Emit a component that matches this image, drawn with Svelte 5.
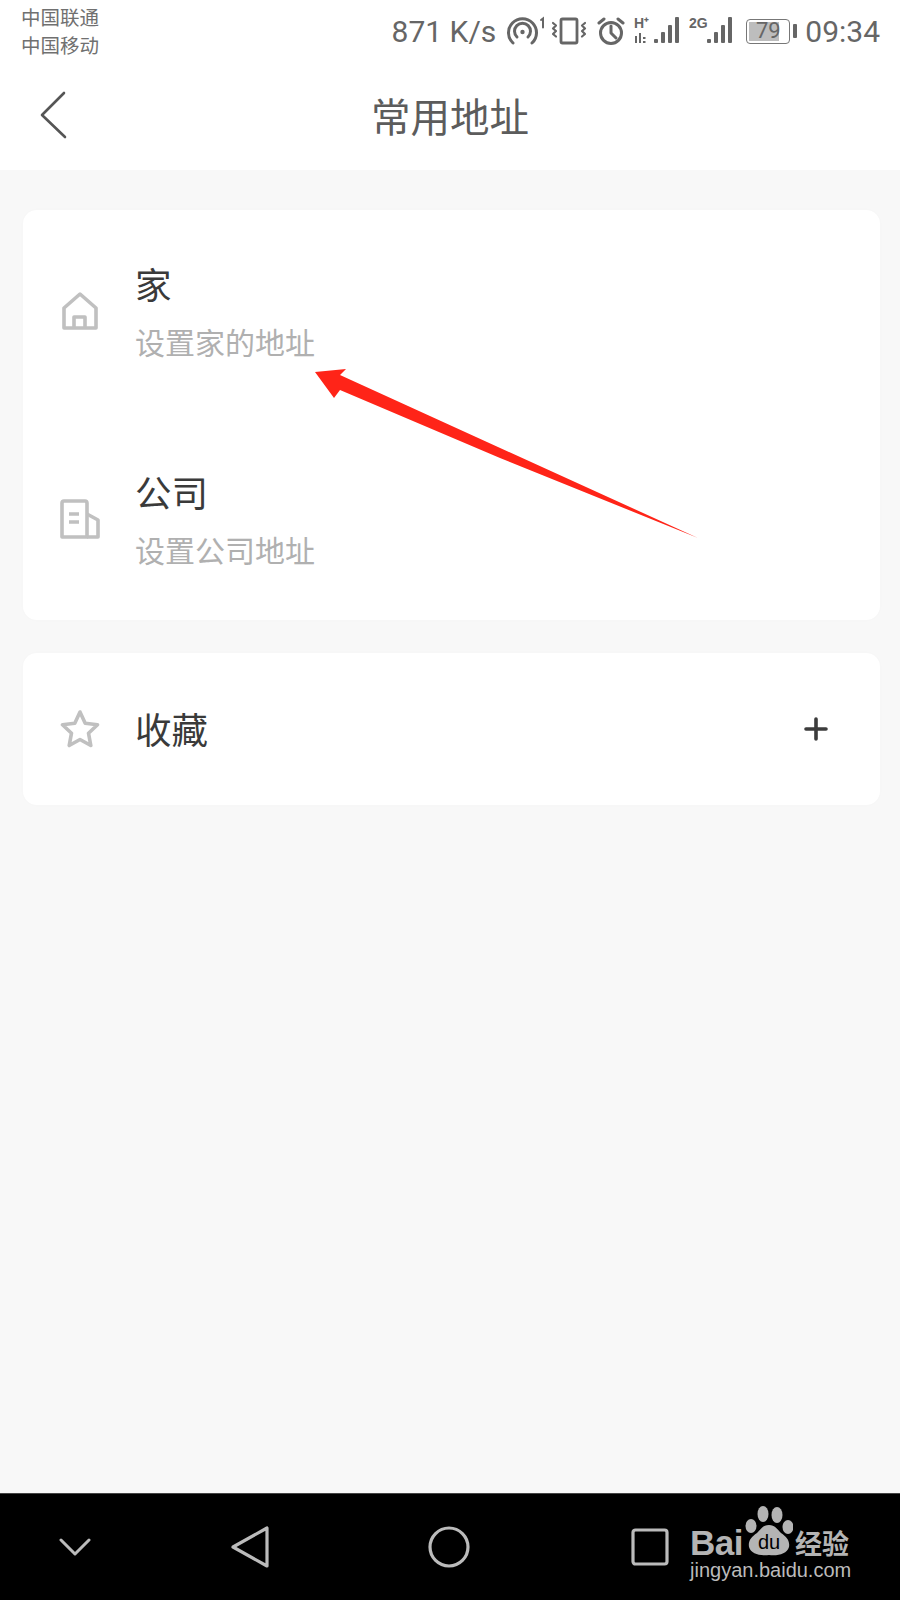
<script lang="ts">
  const rows = [
    { id: 'home', title: '家', sub: '设置家的地址' },
    { id: 'work', title: '公司', sub: '设置公司地址' }
  ]
</script>

<div class="page">
  <header class="head">
    <div class="status">
      <div class="carrier">
        <span>中国联通</span>
        <span>中国移动</span>
      </div>
      <div class="indicators">
        <span class="speed">871 K/s</span>
        <svg class="s-hot" width="40" height="30" viewBox="0 0 40 30" fill="none" stroke="#666" stroke-width="3" stroke-linecap="round">
          <path d="M7 27a14 14 0 1 1 19 0"/>
          <path d="M11 21a8 8 0 1 1 11 0"/>
          <circle cx="16.500" cy="16" r="2.200" fill="#666" stroke="none"/>
          <path d="M35 4l2-1.500v9" stroke-width="2"/>
        </svg>
        <svg class="s-vib" width="36" height="30" viewBox="0 0 36 30" fill="none" stroke="#666" stroke-width="2.800" stroke-linecap="round" stroke-linejoin="round">
          <rect x="10" y="3" width="16" height="24" rx="1.500"/>
          <path d="M2 7l3 2.500-3 3 3 2.500-3 3 3 2.500M34 7l-3 2.500 3 3-3 2.500 3 3-3 2.500" stroke-width="2.200"/>
        </svg>
        <svg class="s-alarm" width="28" height="30" viewBox="0 0 28 30" fill="none" stroke="#666" stroke-width="3" stroke-linecap="round" stroke-linejoin="round">
          <circle cx="14" cy="17" r="10.500"/>
          <path d="M14 10v7l5 5M2 7l5-4M26 7l-5-4"/>
        </svg>
        <svg class="s-sig" width="48" height="30" viewBox="0 0 48 30" fill="#666">
          <text x="0" y="12" class="tiny">H⁺</text>
          <path d="M1 20h2v7H1zM5 17h2v10H5zM9 21h2.500v2H9zM9 25h2.500v2H9z"/>
          <rect x="20" y="23" width="4" height="4" rx="1"/>
          <rect x="27" y="16" width="4" height="11" rx="1"/>
          <rect x="34" y="9" width="4" height="18" rx="1"/>
          <rect x="41" y="1" width="4" height="26" rx="1"/>
        </svg>
        <svg class="s-sig2" width="46" height="30" viewBox="0 0 46 30" fill="#666">
          <text x="0" y="12" class="tiny">2G</text>
          <rect x="18" y="23" width="4" height="4" rx="1"/>
          <rect x="25" y="16" width="4" height="11" rx="1"/>
          <rect x="32" y="9" width="4" height="18" rx="1"/>
          <rect x="39" y="1" width="4" height="26" rx="1"/>
        </svg>
        <div class="battery">
          <div class="cell">
            <div class="level"></div>
            <span>79</span>
          </div>
          <div class="cap"></div>
        </div>
        <span class="clock">09:34</span>
      </div>
    </div>
    <div class="nav-title">
      <svg class="back" width="28" height="48" viewBox="0 0 28 48" fill="none" stroke="#555" stroke-width="2.600" stroke-linecap="round" stroke-linejoin="round">
        <path d="M25 2 3 24l23 22"/>
      </svg>
      <h1>常用地址</h1>
    </div>
  </header>

  <main class="content">
    <section class="card places">
      {#each rows as row (row.id)}
        <div class="row">
          {#if row.id === 'home'}
            <svg class="icon" width="40" height="40" viewBox="0 0 40 40" fill="none" stroke="#c0c0c0" stroke-width="3.600" stroke-linejoin="round">
              <path d="M4 17 20 3l16 14v20H4Z"/>
              <path d="M14 37V26h11v11"/>
            </svg>
          {:else}
            <svg class="icon" width="40" height="40" viewBox="0 0 40 40" fill="none" stroke="#c0c0c0" stroke-width="3.600" stroke-linejoin="round">
              <path d="M2 38V4q0-2 2-2h21q2 0 2 2v34Z"/>
              <path d="M27 15l11 6v17H27"/>
              <path d="M9 15h10M9 23h10"/>
            </svg>
          {/if}
          <div class="text">
            <div class="title">{row.title}</div>
            <div class="sub">{row.sub}</div>
          </div>
        </div>
      {/each}
    </section>

    <section class="card fav">
      <div class="row short">
        <svg class="icon" width="40" height="40" viewBox="0 0 40 40" fill="none" stroke="#c0c0c0" stroke-width="3.600" stroke-linejoin="round">
          <path d="M20 3l5.200 11.200 12.300 1.500-9 8.500 2.300 12.300L20 30.500 9.200 36.500l2.300-12.300-9-8.500 12.300-1.500Z"/>
        </svg>
        <div class="title">收藏</div>
        <svg class="plus" width="24" height="24" viewBox="0 0 24 24" stroke="#3c3c3c" stroke-width="3.600" stroke-linecap="round">
          <path d="M12 2v20M2 12h20"/>
        </svg>
      </div>
    </section>

    <svg class="arrow" width="400" height="185" viewBox="0 0 400 185">
      <path d="M2 17 33 14 27 20 385 183 187 103 27 35 21 43Z" fill="#ff2418"/>
    </svg>
  </main>

  <footer class="sysnav">
    <svg class="n-down" width="32" height="18" viewBox="0 0 32 18" fill="none" stroke="#bbb" stroke-width="3" stroke-linecap="round" stroke-linejoin="round">
      <path d="M2 2l14 14L30 2"/>
    </svg>
    <svg class="n-back" width="38" height="42" viewBox="0 0 38 42" fill="none" stroke="#bbb" stroke-width="3.200" stroke-linejoin="round">
      <path d="M2 21 36 2v38Z"/>
    </svg>
    <svg class="n-home" width="42" height="42" viewBox="0 0 42 42" fill="none" stroke="#bbb" stroke-width="3.200">
      <circle cx="21" cy="21" r="19"/>
    </svg>
    <svg class="n-recent" width="38" height="38" viewBox="0 0 38 38" fill="none" stroke="#bbb" stroke-width="3.200" stroke-linejoin="round">
      <rect x="2" y="2" width="34" height="34" rx="2.500"/>
    </svg>
    <div class="logo">
      <div class="logo-top">
        <span class="bai">Bai</span>
        <svg class="paw" width="48" height="52" viewBox="0 0 48 52" fill="#b4b4b4">
          <ellipse cx="6" cy="20" rx="5.500" ry="7"/>
          <ellipse cx="18" cy="8" rx="5.500" ry="8"/>
          <ellipse cx="32" cy="9" rx="5.500" ry="8"/>
          <ellipse cx="43" cy="21" rx="5.500" ry="7"/>
          <path d="M24 19c6 0 8 4 12 8 6 4 9 8 8 14-2 7-11 9-20 8-9 1-18-1-20-8-1-6 2-10 8-14 4-4 6-8 12-8Z"/>
          <text x="24" y="43" class="du">du</text>
        </svg>
        <span class="cn">经验</span>
      </div>
      <div class="url">jingyan.baidu.com</div>
    </div>
  </footer>
</div>

<style>
  :global(body) {
    margin: 0;
    background: #f8f8f8;
  }
  .page {
    width: 900px;
    height: 1600px;
    display: flex;
    flex-direction: column;
    font-family: "Noto Sans CJK SC", "Noto Sans", sans-serif;
    overflow: hidden;
  }
  .head {
    height: 170px;
    flex: none;
    background: #fff;
  }
  .status {
    height: 62px;
    display: flex;
    align-items: center;
    justify-content: space-between;
    padding: 0 20px 0 21px;
    color: #666;
  }
  .carrier {
    display: flex;
    flex-direction: column;
    font-size: 19.500px;
    line-height: 28px;
    color: #707070;
  }
  .indicators {
    display: flex;
    align-items: center;
    font-family: Roboto, sans-serif;
    font-size: 30px;
  }
  .speed { margin-right: 10px; }
  .s-hot { margin-right: 5px; }
  .s-vib { margin-right: 10px; }
  .s-alarm { margin-right: 9px; }
  .s-sig { margin-right: 7px; }
  .s-sig2 { margin-right: 11px; }
  .tiny {
    font-family: "Liberation Sans", sans-serif;
    font-size: 14px;
    font-weight: 700;
  }
  .battery {
    display: flex;
    align-items: center;
    gap: 3px;
    margin-right: 8px;
  }
  .cell {
    position: relative;
    box-sizing: border-box;
    width: 44px;
    height: 25px;
    border: 1.500px solid #777;
    border-radius: 4px;
    padding: 2px;
    display: flex;
  }
  .level {
    width: 78%;
    background: #bdbdbd;
  }
  .cell span {
    position: absolute;
    inset: 0;
    text-align: center;
    font-size: 22px;
    line-height: 22px;
    color: #666;
  }
  .cap {
    width: 4px;
    height: 14px;
    border-radius: 1px;
    background: #666;
  }
  .nav-title {
    position: relative;
    height: 108px;
    display: flex;
    align-items: center;
    justify-content: center;
  }
  .back {
    position: absolute;
    left: 39px;
    top: 29px;
  }
  h1 {
    margin: 0;
    font-size: 39.500px;
    font-weight: 400;
    color: #5c5c5c;
    line-height: 1;
    position: relative;
    top: -1px;
  }
  .content {
    position: relative;
    flex: 1;
    background: #f8f8f8;
    padding: 40px 20px 0 23px;
    display: flex;
    flex-direction: column;
    gap: 33px;
  }
  .card {
    background: #fff;
    border-radius: 14px;
    box-shadow: 0 0 8px rgba(0, 0, 0, 0.012);
  }
  .places {
    display: flex;
    flex-direction: column;
    gap: 6px;
  }
  .row {
    height: 202px;
    display: flex;
    align-items: center;
    padding: 0 52px 0 37px;
  }
  .row.short { height: 152px; }
  .icon {
    flex: none;
    margin-right: 35px;
  }
  .text {
    display: flex;
    flex-direction: column;
    gap: 15px;
  }
  .title {
    font-size: 36.500px;
    line-height: 44px;
    color: #3a3a3a;
  }
  .sub {
    font-size: 30px;
    line-height: 40px;
    color: #b0b0b0;
  }
  .plus { margin-left: auto; }
  .arrow {
    position: absolute;
    left: 313px;
    top: 185px;
  }
  .sysnav {
    height: 107px;
    flex: none;
    box-sizing: border-box;
    background: #000;
    border-top: 1px solid #444;
    display: flex;
    align-items: center;
    padding-left: 59px;
    color: #b4b4b4;
  }
  .n-down { margin-right: 140px; }
  .n-back { margin-right: 159px; }
  .n-home { margin-right: 161px; }
  .n-recent { margin-right: 21px; }
  .logo {
    display: flex;
    flex-direction: column;
    align-items: flex-start;
    margin-top: -9px;
  }
  .logo-top {
    display: flex;
    align-items: flex-end;
    height: 54px;
  }
  .bai {
    font-family: "Liberation Sans", sans-serif;
    font-weight: 700;
    font-size: 35px;
    line-height: 30px;
    letter-spacing: -0.5px;
    margin-right: 2px;
  }
  .paw { flex: none; }
  .du {
    font-family: "Liberation Sans", sans-serif;
    font-size: 20px;
    text-anchor: middle;
    fill: #000;
  }
  .cn {
    font-size: 27px;
    font-weight: 700;
    line-height: 30px;
    margin-left: 2px;
  }
  .url {
    font-family: "Liberation Sans", sans-serif;
    font-size: 20px;
    line-height: 24px;
    color: #bbb;
  }
</style>
